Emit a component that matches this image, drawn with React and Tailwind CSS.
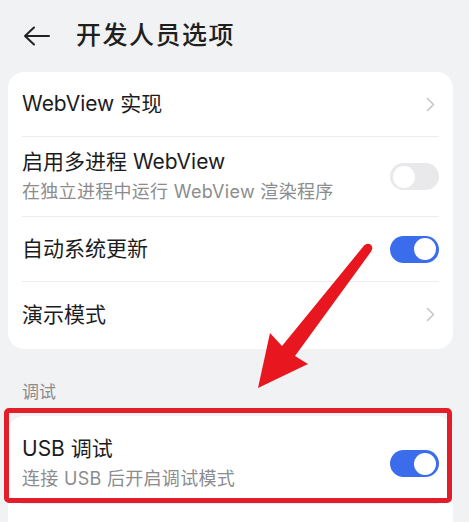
const font = { fontFamily: "Inter, 'Noto Sans CJK SC', sans-serif" };

function Chevron() {
  return (
    <svg width="9" height="15" viewBox="0 0 9 15" fill="none">
      <path d="M1.5 1.5 L7.5 7.5 L1.5 13.5" stroke="#c6c6c8" strokeWidth="1.6" strokeLinecap="round" strokeLinejoin="round" />
    </svg>
  );
}

function Toggle({ on }) {
  return (
    <div
      className={
        on
          ? "w-[49px] h-[27px] rounded-full bg-[#3a6cec] flex items-center justify-end px-[3px]"
          : "w-[49px] h-[27px] rounded-full bg-[#e9e9eb] flex items-center justify-start px-[3px]"
      }
    >
      <div className="w-[22px] h-[22px] rounded-full bg-white" />
    </div>
  );
}

function Row({ title, sub, right, last, height }) {
  return (
    <div className="px-[14px]">
      <div
        className={
          (last ? "" : "border-b border-[#ececee] ") +
          "flex items-center justify-between " +
          height
        }
      >
        <div className="flex flex-col">
          <div className="text-[21px] leading-[26px] text-[#1c1c1e]">{title}</div>
          {sub && (
            <div className="text-[18px] tracking-[0.3px] leading-[24px] mt-[5px] text-[#8c8c8e]">{sub}</div>
          )}
        </div>
        <div className={right === "chevron" ? "pr-[4px]" : ""}>
          {right === "chevron" ? <Chevron /> : <Toggle on={right === "on"} />}
        </div>
      </div>
    </div>
  );
}

export default function App() {
  return (
    <div className="relative w-[469px] h-[522px] overflow-hidden bg-[#f1f2f4]" style={font}>
      <div className="flex h-[72px] items-center pl-[23px] gap-[25px]">
        <svg width="28" height="20" viewBox="0 0 28 20" fill="none">
          <path d="M26 10 H2 M11 1.5 L2 10 L11 18.5" stroke="#222" strokeWidth="2" strokeLinecap="round" strokeLinejoin="round" />
        </svg>
        <div className="text-[25px] tracking-[1.5px] text-[#1f1f1f] font-medium">开发人员选项</div>
      </div>

      <div className="ml-[8px] w-[445px] bg-white rounded-[16px] pb-[2px]">
        <Row title="WebView 实现" right="chevron" height="h-[65px]" />
        <Row
          title="启用多进程 WebView"
          sub="在独立进程中运行 WebView 渲染程序"
          right="off"
          height="h-[80px]"
        />
        <Row title="自动系统更新" right="on" height="h-[65px]" />
        <Row title="演示模式" right="chevron" height="h-[65px]" last />
      </div>

      <div className="pl-[22px] pt-[31px] text-[17px] leading-[24px] text-[#8c8c8e]">调试</div>

      <div className="ml-[8px] mt-[12px] w-[445px] bg-white rounded-t-[16px] pt-[8px]">
        <Row title="USB 调试" sub="连接 USB 后开启调试模式" right="on" height="h-[80px]" />
        <Row title="撤消 USB 调试授权" right="chevron" height="h-[65px]" last />
      </div>

      <div className="absolute left-[4px] top-[408px] w-[448px] h-[95px] border-[5px] border-[#e41d2b] rounded-[5px]" />

      <svg className="absolute left-0 top-0" width="469" height="522" viewBox="0 0 469 522">
        <polygon
          points="371.5,251 295,356 308,364 258,388 270,333 282,346 364.5,245"
          fill="#e8171f"
        />
        <circle cx="368" cy="248" r="4.3" fill="#e8171f" />
      </svg>
    </div>
  );
}
